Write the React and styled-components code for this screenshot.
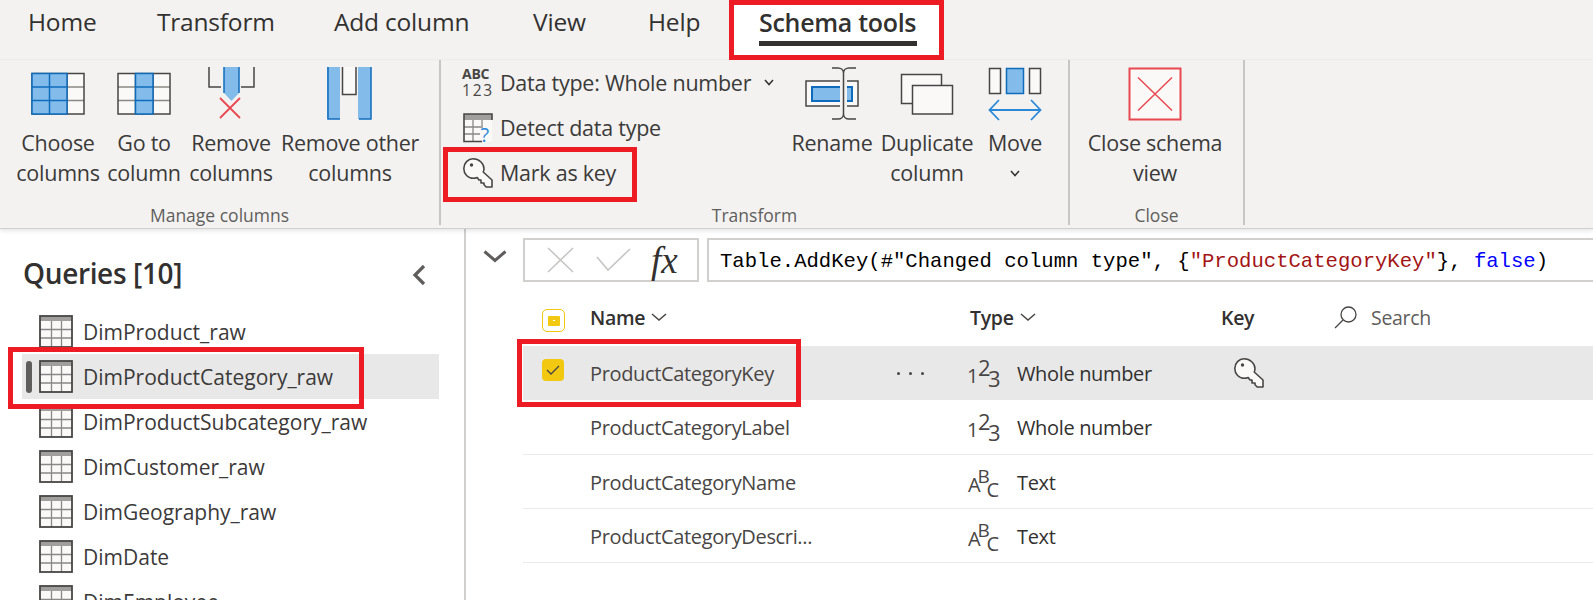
import React from "react";
import styled, { createGlobalStyle } from "styled-components";

const Global = createGlobalStyle`
  html, body { margin: 0; padding: 0; background: #fff; }
  body { font-family: "Open Sans", "Noto Sans", sans-serif; color: #323130; }
  * { box-sizing: border-box; }
`;

const Page = styled.div`
  width: 1593px; height: 600px; overflow: hidden; display: flex; flex-direction: column;
`;
const Ribbon = styled.header`
  height: 229px; flex: none; background: #f3f2f1; border-bottom: 1px solid #d2d0ce;
  box-shadow: 0 2px 4px rgba(0,0,0,.1); position: relative; z-index: 2;
`;
const TabBar = styled.nav`
  height: 60px; display: flex; padding-left: 28px; border-bottom: 1px solid #edebe9;
`;
const Tab = styled.div`
  width: ${p => p.$w}px; font-size: 24.5px; letter-spacing: -0.2px; line-height: 44px; color: #323130; white-space: nowrap;
`;
const SchemaTab = styled.div`
  width: 215px; height: 60px; margin-left: -30px; border: 5px solid #ed1c24; background: #fff;
  padding: 0 25px; font-size: 25px; font-weight: 600; letter-spacing: -0.3px; line-height: 34px; color: #323130; white-space: nowrap;
`;
const SchemaLabel = styled.div`
  height: 41px; border-bottom: 5px solid #323130; width: 158px;
`;
const Groups = styled.div`display: flex; height: 165px;`;
const Group = styled.section`
  width: ${p => p.$w}px; height: 165px; border-right: 2px solid #c8c6c4; display: flex; flex-direction: column;
`;
const GroupBody = styled.div`
  flex: 1; display: flex; align-items: flex-start; padding-left: ${p => p.$pad}px;
`;
const GroupLabel = styled.div`
  height: 20px; line-height: 20px; text-align: center; font-size: 17.5px; color: #605e5c;
`;
const BigButton = styled.div`
  width: ${p => p.$w}px; margin-right: ${p => p.$gap || 0}px; padding-top: 7px; display: flex; flex-direction: column; align-items: center; flex: none;
`;
const BigText = styled.div`
  margin-top: 7px; font-size: 21.5px; line-height: 30px; text-align: center; color: #3b3a39; letter-spacing: -0.25px; white-space: nowrap;
`;
const MoveChevron = styled.div`
  height: 30px; display: flex; align-items: center; justify-content: center;
`;
const SmallColumn = styled.div`width: 330px; flex: none; display: flex; flex-direction: column;`;
const SmallRow = styled.div`
  position: relative; height: 45px; display: flex; align-items: center; gap: 7px; font-size: 21.5px; letter-spacing: -0.25px; color: #3b3a39; white-space: nowrap;
`;
const DataChevron = styled.span`display: block; margin-left: 6px;`;
const Highlight = styled.div`
  position: absolute; top: ${p => p.$t}px; left: ${p => p.$l}px; width: ${p => p.$w}px; height: ${p => p.$h}px;
  border: 5px solid #ed1c24; pointer-events: none; z-index: 3;
`;
const Body = styled.div`flex: 1; display: flex; min-height: 0;`;
const Sidebar = styled.aside`
  width: 466px; flex: none; border-right: 2px solid #d2d0ce; padding-left: 22px; overflow: hidden;
`;
const SidebarHead = styled.div`
  height: 80px; width: 417px; display: flex; align-items: center; justify-content: space-between; padding: 7px 12px 0 1px;
`;
const SidebarTitle = styled.h2`
  margin: 0; font-size: 28px; font-weight: 600; letter-spacing: -0.35px; color: #323130;
`;
const BackSlot = styled.div`padding-top: 4px;`;
const QueryRow = styled.div`
  position: relative; width: 417px; height: 45px; display: flex; align-items: center; padding-left: 17px; gap: 10px;
  font-size: 21px; color: #3b3a39; background: ${p => p.$active ? "#e8e8e8" : "transparent"};
`;
const ActiveBar = styled.span`
  position: absolute; left: 4px; top: 7px; width: 6px; height: 32px; border-radius: 3px; background: #605e5c;
`;
const Main = styled.main`flex: 1; padding-top: 9px; min-width: 0;`;
const FormulaBar = styled.div`display: flex; align-items: stretch; height: 44px;`;
const Collapse = styled.div`
  width: 57px; flex: none; display: flex; align-items: flex-start; padding: 12px 0 0 17px;
`;
const FormulaButtons = styled.div`
  width: 176px; flex: none; border: 2px solid #d2d0ce; display: flex; align-items: center; padding-left: 22px; gap: 22px;
`;
const Fx = styled.span`
  font-family: "Liberation Serif", serif; font-style: italic; font-size: 37px; line-height: 1; color: #323130; margin-left: -2px;
`;
const FormulaInput = styled.div`
  flex: 1; margin-left: 8px; border: 2px solid #d2d0ce; border-right: 0; padding-left: 11px;
  font-family: "Liberation Mono", monospace; font-size: 20.6px; line-height: 43px; color: #000; white-space: pre;
`;
const Str = styled.span`color: #a31515;`;
const Kw = styled.span`color: #0000ff;`;
const GridArea = styled.div`padding-left: 57px;`;
const gridCols = "19px 48px 307px 71px 49px 204px 113px 1fr";
const HeaderRow = styled.div`
  height: 64px; display: grid; grid-template-columns: ${gridCols}; align-items: center; padding-top: 6px;
  font-size: 19.5px; font-weight: 600; letter-spacing: -0.3px; color: #323130;
`;
const DataRow = styled.div`
  position: relative; height: ${p => p.$h}px; display: grid; grid-template-columns: ${gridCols}; align-items: center; padding-top: 1px;
  font-size: 20px; letter-spacing: -0.35px; color: #484644; background: ${p => p.$active ? "#e8e8e8" : "transparent"};
  border-bottom: 1px solid ${p => p.$active ? "transparent" : "#edebe9"};
`;
const HeaderCell = styled.div`display: flex; align-items: center; gap: 6px; white-space: nowrap;`;
const TypeHeader = styled(HeaderCell)`grid-column: 5 / span 2; padding-left: 2px;`;
const SearchCell = styled.div`
  display: flex; align-items: center; gap: 14px; font-size: 19.5px; font-weight: 400; color: #605e5c;
`;
const HeaderCheck = styled.div`
  width: 23px; height: 23px; border: 1px solid #f2c811; border-radius: 5px; display: flex; align-items: center; justify-content: center; margin-top: 7px;
`;
const HeaderCheckFill = styled.div`
  width: 12px; height: 10px; background: #f2c811; border-radius: 1px; display: flex; align-items: center; justify-content: center;
  &::after { content: ""; width: 2px; height: 1px; background: #fff; }
`;
const RowCheck = styled.div`
  width: 22px; height: 22px; border-radius: 4px; background: #f2c811; display: flex; align-items: center; justify-content: center;
  margin-top: -6px;
`;
const Cell = styled.div`white-space: nowrap; color: ${p => p.$dark ? "#323130" : "inherit"};`;
const KeyCell = styled.div`padding-left: 13px;`;
const Dots = styled.div`display: flex; gap: 9px; & > span { width: 3px; height: 3px; border-radius: 50%; background: #484644; }`;
const Icon = styled.svg`display: block; flex: none; overflow: visible;`;

const BLUE = "#83bcea", BLUEL = "#0f6cbd", DARK = "#484644", GREY = "#8a8886", WHITE = "#faf9f8", RED = "#e8484f";

const Big = ({ x, children }) => (
  <Icon width="54" height="54" viewBox={`${x} 67 54 54`} fill="none">{children}</Icon>
);

const GridIcon = ({ x, blueFrom, blueTo }) => {
  const xs = [x, x + 17.5, x + 35, x + 52];
  const ys = [73.5, 87, 100.5, 114];
  const bx0 = xs[blueFrom], bx1 = xs[blueTo];
  return (
    <Big x={x - 1}>
      <rect x={xs[0]} y={ys[0]} width="52" height="40.5" fill={WHITE} />
      {ys.slice(1, 3).map(y => <path key={y} d={`M${xs[0]} ${y}H${xs[3]}`} stroke={GREY} strokeWidth="1.5" />)}
      <rect x={xs[0]} y={ys[0]} width="52" height="40.5" stroke={DARK} strokeWidth="1.5" />
      <path d={`M${xs[1]} ${ys[0]}V${ys[3]}M${xs[2]} ${ys[0]}V${ys[3]}`} stroke={DARK} strokeWidth="1.5" />
      <rect x={bx0} y={ys[0]} width={bx1 - bx0} height="40.5" fill={BLUE} stroke={BLUEL} strokeWidth="1.5" />
      {ys.slice(1, 3).map(y => <path key={y} d={`M${bx0} ${y}H${bx1}`} stroke={BLUEL} strokeWidth="1.5" />)}
      {blueTo - blueFrom === 2 && <path d={`M${xs[1]} ${ys[0]}V${ys[3]}`} stroke={BLUEL} strokeWidth="1.5" />}
    </Big>
  );
};

const RemoveIcon = () => (
  <Big x={204}>
    <path d="M209 67V87H221M254 67V87H241" stroke={DARK} strokeWidth="1.5" />
    <path d="M224 67V93L231.500 101L239 93V67Z" fill={BLUE} />
    <path d="M224 67V93M239 67V93" stroke={BLUEL} strokeWidth="1.5" />
    <path d="M220 98L240 118M240 98L220 118" stroke={RED} strokeWidth="1.8" />
  </Big>
);
const RemoveOtherIcon = () => (
  <Big x={323}>
    <rect x="327" y="67" width="13" height="52" fill={BLUE} />
    <rect x="358" y="67" width="13" height="52" fill={BLUE} />
    <path d="M328 67V119H340M371 67V119H359" stroke={BLUEL} strokeWidth="1.5" />
    <rect x="342" y="67" width="14" height="27" fill={WHITE} />
    <path d="M342.500 67V94.500H356V67" stroke={DARK} strokeWidth="1.5" />
  </Big>
);
const RenameIcon = () => (
  <Big x={805}>
    <rect x="806" y="81" width="52" height="25" fill={WHITE} stroke={DARK} strokeWidth="1.5" />
    <rect x="812" y="87" width="40" height="14" fill={BLUE} stroke={BLUEL} strokeWidth="2" />
    <path d="M840 72H847V115H840Z" fill="#f3f2f1" />
    <path d="M832 68H838C841 68 843.500 70 843.500 73V114C843.500 117 841 119 838 119H832M856 68H849C846 68 843.500 70 843.500 73M843.500 114C843.500 117 846 119 849 119H856" stroke={DARK} strokeWidth="1.5" />
  </Big>
);
const DuplicateIcon = () => (
  <Big x={899}>
    <rect x="900.500" y="74.500" width="40" height="29" fill={WHITE} stroke={DARK} strokeWidth="1.5" />
    <rect x="911.500" y="85.500" width="40" height="28.500" fill={WHITE} stroke={DARK} strokeWidth="1.5" />
  </Big>
);
const MoveIcon = () => (
  <Big x={988}>
    <rect x="989.500" y="68.500" width="11" height="25" fill={WHITE} stroke={DARK} strokeWidth="1.5" />
    <rect x="1006.500" y="68.500" width="17" height="25" fill={BLUE} stroke={BLUEL} strokeWidth="1.5" />
    <rect x="1029.500" y="68.500" width="11" height="25" fill={WHITE} stroke={DARK} strokeWidth="1.5" />
    <path d="M990 110H1040M999 100L989.500 110L999 120M1031 100L1040.500 110L1031 120" stroke="#2b88d8" strokeWidth="1.8" />
  </Big>
);
const CloseIcon = () => (
  <Big x={1128}>
    <rect x="1129.500" y="68.500" width="51" height="51" fill={WHITE} stroke={RED} strokeWidth="2" />
    <path d="M1138 77.500L1172 110.500M1172 77.500L1138 110.500" stroke={RED} strokeWidth="1.5" />
  </Big>
);
const ChevronDown = ({ w = 8, c = DARK, sw = 1.5 }) => (
  <Icon width={w * 2} height={w} viewBox="0 0 16 8" fill="none"><path d="M1 1L8 7L15 1" stroke={c} strokeWidth={sw} /></Icon>
);
const SmallChevron = () => (
  <Icon width="10" height="7" viewBox="0 0 10 7" fill="none"><path d="M1 1L5 5.500L9 1" stroke="#323130" strokeWidth="1.500" /></Icon>
);
const KeyIcon = () => (
  <Icon width="30" height="30" viewBox="0 0 30 30" fill="none">
    <path d="M10 .8C16 .8 21 5.300 21 10.800C21 12 20.700 13 20.200 14L29 22V29H23.200L21 26.800V25H18V22H16L14.200 19.500C13 20 12 20.300 10.500 20.300C5 20.300 .8 16 .8 10.500C.8 5 5 .8 10 .8Z" fill={WHITE} stroke={DARK} strokeWidth="1.6" strokeLinejoin="round" />
    <circle cx="8.500" cy="7" r="1.700" fill={DARK} />
  </Icon>
);
const AbcIcon = () => (
  <Icon width="30" height="30" viewBox="0 0 30 30">
    <text x="-1" y="11" fontFamily="Open Sans, sans-serif" fontWeight="700" fontSize="14" fill={DARK}>ABC</text>
    <text x="-1" y="28" fontFamily="Open Sans, sans-serif" fontSize="15.500" letterSpacing="1.800" fill={DARK}>123</text>
  </Icon>
);
const DetectIcon = () => (
  <Icon width="30" height="30" viewBox="0 0 30 30" fill="none">
    <rect x="1" y="1" width="28" height="27.500" fill={WHITE} />
    <rect x="1" y="1" width="28" height="6" fill="#a19f9d" />
    <path d="M1 14H20M1 21H17M10 7V28M19 7V13" stroke={GREY} strokeWidth="1.3" />
    <path d="M29 7V1H1V28.500H19" stroke={DARK} strokeWidth="1.600" />
    <text x="17.500" y="28.500" fontFamily="Open Sans, sans-serif" fontSize="20" fill="#2b88d8">?</text>
  </Icon>
);
const TableIcon = () => (
  <Icon width="34" height="33" viewBox="0 0 34 33" fill="none">
    <rect x="1" y="1" width="32" height="31" fill={WHITE} />
    <rect x="1" y="1" width="32" height="5" fill="#a19f9d" />
    <path d="M12.500 6V32M22.500 6V32M1 14.500H33M1 23H33" stroke={GREY} strokeWidth="1.300" />
    <rect x="1" y="1" width="32" height="31" stroke={DARK} strokeWidth="1.800" />
  </Icon>
);
const BackIcon = () => (
  <Icon width="16" height="22" viewBox="0 0 16 22" fill="none"><path d="M13 2L4 11L13 20" stroke="#605e5c" strokeWidth="3.200" /></Icon>
);
const XIcon = () => (
  <Icon width="27" height="26" viewBox="0 0 27 26" fill="none"><path d="M1 1L26 25M26 1L1 25" stroke="#c8c6c4" strokeWidth="1.600" /></Icon>
);
const CheckIcon = () => (
  <Icon width="35" height="24" viewBox="0 0 35 24" fill="none"><path d="M1 9L12 22L34 1" stroke="#c8c6c4" strokeWidth="1.600" /></Icon>
);
const SearchGlyph = () => (
  <Icon width="23" height="23" viewBox="0 0 23 23" fill="none">
    <circle cx="14.500" cy="8.500" r="7.500" stroke="#484644" strokeWidth="1.300" />
    <path d="M9 14L1 22" stroke="#484644" strokeWidth="1.300" />
  </Icon>
);
const NumberIcon = () => (
  <Icon width="33" height="29" viewBox="0 0 33 29">
    <g fontFamily="Open Sans, sans-serif" fill="#484644">
      <text x="-1" y="24" fontSize="20">1</text>
      <text x="10" y="17" fontSize="22">2</text>
      <text x="20" y="28" fontSize="22">3</text>
    </g>
  </Icon>
);
const TextIcon = () => (
  <Icon width="33" height="29" viewBox="0 0 33 29">
    <g fontFamily="Open Sans, sans-serif" fill="#484644">
      <text x="0" y="24" fontSize="20">A</text>
      <text x="9.500" y="15" fontSize="19">B</text>
      <text x="18.500" y="29" fontSize="20">C</text>
    </g>
  </Icon>
);
const TickIcon = () => (
  <Icon width="14" height="10" viewBox="0 0 14 10" fill="none"><path d="M1 5L5 9L13 1" stroke="#484644" strokeWidth="1.300" /></Icon>
);

const tabs = [["Home", 129], ["Transform", 177], ["Add column", 199], ["View", 115], ["Help", 111]];
const queries = ["DimProduct_raw", "DimProductCategory_raw", "DimProductSubcategory_raw", "DimCustomer_raw", "DimGeography_raw", "DimDate", "DimEmployee"];
const fields = [
  { name: "ProductCategoryKey", type: "Whole number", num: true, h: 54 },
  { name: "ProductCategoryLabel", type: "Whole number", num: true, h: 55 },
  { name: "ProductCategoryName", type: "Text", h: 54 },
  { name: "ProductCategoryDescri...", type: "Text", h: 54 },
];

export default function App() {
  return (
    <Page>
      <Global />
      <Ribbon>
        <TabBar>
          {tabs.map(([t, w]) => <Tab key={t} $w={w}>{t}</Tab>)}
          <SchemaTab><SchemaLabel>Schema tools</SchemaLabel></SchemaTab>
        </TabBar>
        <Groups>
          <Group $w={441}>
            <GroupBody $pad={17}>
              <BigButton $w={82} $gap={8}><GridIcon x={32} blueFrom={0} blueTo={2} /><BigText>Choose<br />columns</BigText></BigButton>
              <BigButton $w={74} $gap={9}><GridIcon x={119} blueFrom={1} blueTo={2} /><BigText>Go to<br />column</BigText></BigButton>
              <BigButton $w={82} $gap={9}><RemoveIcon /><BigText>Remove<br />columns</BigText></BigButton>
              <BigButton $w={138}><RemoveOtherIcon /><BigText>Remove other<br />columns</BigText></BigButton>
            </GroupBody>
            <GroupLabel>Manage columns</GroupLabel>
          </Group>
          <Group $w={629}>
            <GroupBody $pad={22}>
              <SmallColumn>
                <SmallRow><AbcIcon />Data type: Whole number<DataChevron><SmallChevron /></DataChevron></SmallRow>
                <SmallRow><DetectIcon />Detect data type</SmallRow>
                <SmallRow>
                  <KeyIcon />Mark as key
                  <Highlight $t={-3} $l={-20} $w={194} $h={55} />
                </SmallRow>
              </SmallColumn>
              <BigButton $w={78} $gap={9}><RenameIcon /><BigText>Rename</BigText></BigButton>
              <BigButton $w={94} $gap={13}><DuplicateIcon /><BigText>Duplicate<br />column</BigText></BigButton>
              <BigButton $w={56}><MoveIcon /><BigText>Move<MoveChevron><SmallChevron /></MoveChevron></BigText></BigButton>
            </GroupBody>
            <GroupLabel>Transform</GroupLabel>
          </Group>
          <Group $w={175}>
            <GroupBody $pad={17}>
              <BigButton $w={136}><CloseIcon /><BigText>Close schema<br />view</BigText></BigButton>
            </GroupBody>
            <GroupLabel>Close</GroupLabel>
          </Group>
        </Groups>
      </Ribbon>
      <Body>
        <Sidebar>
          <SidebarHead>
            <SidebarTitle>Queries [10]</SidebarTitle>
            <BackSlot><BackIcon /></BackSlot>
          </SidebarHead>
          {queries.map(q => (
            <QueryRow key={q} $active={q === "DimProductCategory_raw"}>
              {q === "DimProductCategory_raw" && <ActiveBar />}
              <TableIcon />{q}
              {q === "DimProductCategory_raw" && <Highlight $t={-7} $l={-14} $w={356} $h={62} />}
            </QueryRow>
          ))}
        </Sidebar>
        <Main>
          <FormulaBar>
            <Collapse><ChevronDown w={12} c="#605e5c" sw={2} /></Collapse>
            <FormulaButtons><XIcon /><CheckIcon /><Fx>fx</Fx></FormulaButtons>
            <FormulaInput>Table.AddKey(#"Changed column type", {"{"}<Str>"ProductCategoryKey"</Str>{"}"}, <Kw>false</Kw>)</FormulaInput>
          </FormulaBar>
          <GridArea>
            <HeaderRow>
              <span />
              <HeaderCheck><HeaderCheckFill /></HeaderCheck>
              <HeaderCell>Name<ChevronDown w={8} /></HeaderCell>
              <span />
              <TypeHeader>Type<ChevronDown w={8} /></TypeHeader>
              <HeaderCell>Key</HeaderCell>
              <SearchCell><SearchGlyph />Search</SearchCell>
            </HeaderRow>
            {fields.map((f, i) => (
              <DataRow key={f.name} $active={i === 0} $h={f.h}>
                <span />
                {i === 0 ? <RowCheck><TickIcon /></RowCheck> : <span />}
                <Cell>{f.name}</Cell>
                {i === 0 ? <Dots><span /><span /><span /></Dots> : <span />}
                {f.num ? <NumberIcon /> : <TextIcon />}
                <Cell $dark>{f.type}</Cell>
                {i === 0 ? <KeyCell><KeyIcon /></KeyCell> : <span />}
                <span />
                {i === 0 && <Highlight $t={-7} $l={-6} $w={284} $h={68} />}
              </DataRow>
            ))}
          </GridArea>
        </Main>
      </Body>
    </Page>
  );
}
